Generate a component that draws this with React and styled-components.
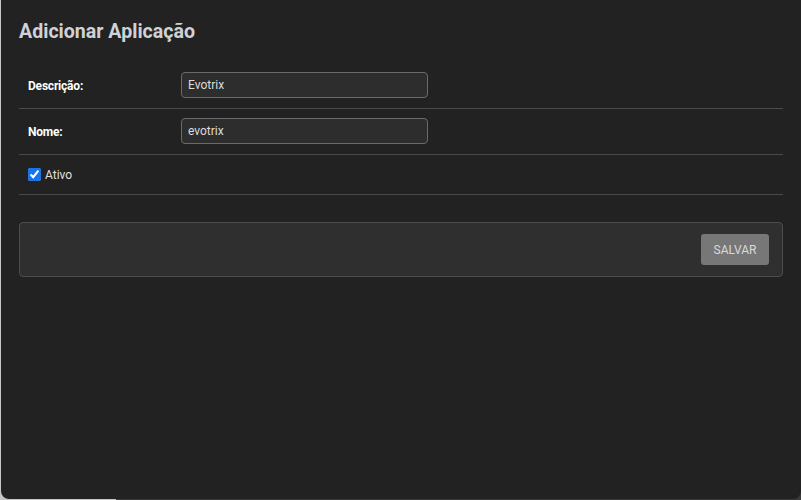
import React from "react";
import styled, { createGlobalStyle } from "styled-components";

const Global = createGlobalStyle`
  html, body { margin: 0; padding: 0; }
  body {
    width: 801px;
    height: 500px;
    overflow: hidden;
    background: linear-gradient(to right, #c6c6c6 0, #c6c6c6 116px, #3a3a3a 116px);
    font-family: Roboto, "Liberation Sans", Arial, sans-serif;
  }
`;

const Panel = styled.div`
  margin-left: 1px;
  width: 800px;
  height: 499px;
  box-sizing: border-box;
  background: #222222;
  border-radius: 0 0 8px 8px;
  padding: 20px 18px 0 18px;
`;

const Title = styled.h1`
  margin: 0 0 19px 0;
  font-size: 19.6px;
  line-height: 24px;
  font-weight: 700;
  color: #cfd2d6;
`;

const Row = styled.div`
  display: grid;
  grid-template-columns: 153px 247px;
  align-items: center;
  box-sizing: border-box;
  height: ${(p) => p.$h || 46}px;
  padding: 0 9px 1px;
  border-bottom: 1px solid #4b4b4b;
`;

const Label = styled.label`
  font-size: 12px;
  font-weight: 700;
  color: #ffffff;
  letter-spacing: -0.2px;
  padding-top: 1px;
`;

const Input = styled.input`
  box-sizing: border-box;
  width: 247px;
  height: 26px;
  margin: 0;
  padding: 0 6px;
  background: #2d2d2d;
  border: 1px solid #6a6a6a;
  border-radius: 4px;
  color: #dcdcdc;
  font-family: Roboto, "Liberation Sans", Arial, sans-serif;
  font-size: 12px;
  outline: none;
`;

const CheckWrap = styled.label`
  display: flex;
  align-items: center;
  gap: 4px;
  font-size: 12px;
  color: #e0e0e0;
  padding-top: 1px;
`;

const Check = styled.input`
  width: 13px;
  height: 13px;
  margin: 0;
  accent-color: #1a73e8;
`;

const Footer = styled.div`
  margin-top: 27px;
  box-sizing: border-box;
  height: 55px;
  display: flex;
  justify-content: flex-end;
  align-items: center;
  padding: 0 13px;
  background: #2f2f2f;
  border: 1px solid #4d4d4d;
  border-radius: 4px;
`;

const Button = styled.button`
  box-sizing: border-box;
  width: 68px;
  height: 31px;
  border: none;
  border-radius: 3px;
  background: #777777;
  color: #d8dadd;
  font-family: Roboto, "Liberation Sans", Arial, sans-serif;
  font-size: 12px;
  text-transform: uppercase;
  cursor: pointer;
`;

export default function App() {
  return (
    <>
      <Global />
      <Panel>
        <Title>Adicionar Aplicação</Title>
        <Row>
          <Label>Descrição:</Label>
          <Input defaultValue="Evotrix" />
        </Row>
        <Row>
          <Label>Nome:</Label>
          <Input defaultValue="evotrix" />
        </Row>
        <Row $h={40}>
          <CheckWrap>
            <Check type="checkbox" defaultChecked />
            Ativo
          </CheckWrap>
        </Row>
        <Footer>
          <Button>Salvar</Button>
        </Footer>
      </Panel>
    </>
  );
}
